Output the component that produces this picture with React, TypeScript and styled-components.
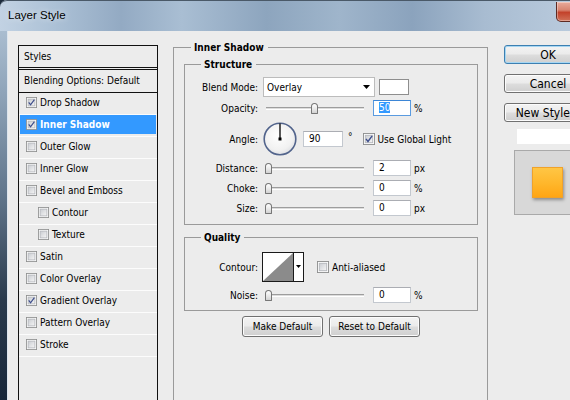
import React, { useId } from 'react';
import styled, { createGlobalStyle } from 'styled-components';

const GlobalStyle = createGlobalStyle`
  html, body {
    margin: 0;
    padding: 0;
    width: 570px;
    height: 400px;
    overflow: hidden;
    background: #1d2c3d;
  }
  body {
    font-family: "DejaVu Sans Condensed", "DejaVu Sans", sans-serif;
    font-stretch: condensed;
    font-size: 10px;
    color: #000;
  }
  * {
    box-sizing: border-box;
  }
`;

type StyleItem = {
  label: string;
  checked?: boolean;
  selected?: boolean;
  nested?: boolean;
};

const styleItems: StyleItem[] = [
  { label: 'Drop Shadow', checked: true },
  { label: 'Inner Shadow', checked: true, selected: true },
  { label: 'Outer Glow' },
  { label: 'Inner Glow' },
  { label: 'Bevel and Emboss' },
  { label: 'Contour', nested: true },
  { label: 'Texture', nested: true },
  { label: 'Satin' },
  { label: 'Color Overlay' },
  { label: 'Gradient Overlay', checked: true },
  { label: 'Pattern Overlay' },
  { label: 'Stroke' },
];

const Checkbox: React.FC<{ checked?: boolean; size?: number }> = ({ checked, size = 12 }) => {
  const id = useId();
  return (
    <CheckSvg width={size} height={size} viewBox="0 0 13 13">
      <defs>
        <linearGradient id={id} x1="0" y1="0" x2="1" y2="1">
          <stop offset="0" stopColor="#c9ccd1" />
          <stop offset="1" stopColor="#f6f6f6" />
        </linearGradient>
      </defs>
      <rect x="0.5" y="0.5" width="12" height="12" fill="#fdfdfd" stroke="#8e8f8f" />
      <rect x="2.5" y="2.5" width="8" height="8" fill={`url(#${id})`} stroke="#b4b7bc" />
      {checked && (
        <path d="M3.2 6.4 L5.4 9.2 L9.9 3.2" fill="none" stroke="#3f4f8c" strokeWidth="1.5" />
      )}
    </CheckSvg>
  );
};

const Slider: React.FC<{ value: number }> = ({ value }) => (
  <SliderBox>
    <Track />
    <Thumb style={{ left: 3 + (value / 100) * 91 }} />
  </SliderBox>
);

const AngleDial: React.FC = () => (
  <DialSvg width="34" height="34" viewBox="0 0 34 34">
    <defs>
      <radialGradient id="dialFill" cx="0.45" cy="0.4" r="0.65">
        <stop offset="0" stopColor="#ffffff" />
        <stop offset="0.7" stopColor="#f1f1f1" />
        <stop offset="1" stopColor="#d9dbe0" />
      </radialGradient>
    </defs>
    <circle cx="17" cy="17" r="15.8" fill="url(#dialFill)" stroke="#52648c" strokeWidth="1.6" />
    <line x1="17" y1="17" x2="17" y2="1.5" stroke="#000" strokeWidth="1.3" />
    <rect x="15.5" y="15.5" width="3" height="3" fill="#000" />
  </DialSvg>
);

const ContourPicker: React.FC = () => (
  <svg width="42" height="30" viewBox="0 0 42 30">
    <rect x="0.5" y="0.5" width="41" height="29" fill="#fff" stroke="#1a1a1a" />
    <polygon points="1,29 31,1 31,29" fill="#8b8b8b" />
    <line x1="31.5" y1="1" x2="31.5" y2="29" stroke="#1a1a1a" />
    <polygon points="34,13 39,13 36.5,16" fill="#000" />
  </svg>
);

const SliderRow: React.FC<{ label: string; value: number; field: string; unit: string; focused?: boolean; mt?: number }> = ({
  label,
  value,
  field,
  unit,
  focused,
  mt = 0,
}) => (
  <Row $h={20} $mt={mt}>
    <Label>{label}</Label>
    <Slider value={value} />
    <NumberField $w={38} $ml={4} $focused={focused}>
      {focused ? <Selection>{field}</Selection> : field}
    </NumberField>
    <Unit>{unit}</Unit>
  </Row>
);

export default function App() {
  return (
    <>
      <GlobalStyle />
      <Window>
        <TitleBar>
          <Title>Layer Style</Title>
          <CloseButton />
        </TitleBar>
        <Client>
          <StylesPanel>
            <StylesHeader>Styles</StylesHeader>
            <StylesList>
              <BlendingRow>Blending Options: Default</BlendingRow>
              {styleItems.map((item) => (
                <Item key={item.label}>
                  <ItemInner $selected={item.selected} $nested={item.nested}>
                    <Checkbox checked={item.checked} size={11} />
                    <ItemText>{item.label}</ItemText>
                  </ItemInner>
                </Item>
              ))}
            </StylesList>
          </StylesPanel>

          <OuterGroup>
            <OuterLegend>Inner Shadow</OuterLegend>
            <SubGroup $pt={6} $pb={6}>
              <SubLegend>Structure</SubLegend>
              <Row $h={20}>
                <Label>Blend Mode:</Label>
                <Select>
                  <span>Overlay</span>
                  <svg width="7" height="4" viewBox="0 0 7 4">
                    <polygon points="0,0 7,0 3.5,4" fill="#000" />
                  </svg>
                </Select>
                <ColorSwatch />
              </Row>
              <SliderRow label="Opacity:" value={50} field="50" unit="%" focused mt={1} />
              <Row $h={38} $mt={2}>
                <Label>Angle:</Label>
                <AngleDial />
                <NumberField $w={40} $ml={6}>90</NumberField>
                <Degree>°</Degree>
                <Checkbox checked size={12} />
                <CheckText>Use Global Light</CheckText>
              </Row>
              <SliderRow label="Distance:" value={0} field="2" unit="px" />
              <SliderRow label="Choke:" value={0} field="0" unit="%" />
              <SliderRow label="Size:" value={0} field="0" unit="px" />
            </SubGroup>

            <SubGroup $pt={8} $pb={5} $mt={6}>
              <SubLegend>Quality</SubLegend>
              <Row $h={30}>
                <Label>Contour:</Label>
                <ContourPicker />
                <AntiAlias>
                  <Checkbox size={12} />
                  <CheckText>Anti-aliased</CheckText>
                </AntiAlias>
              </Row>
              <SliderRow label="Noise:" value={0} field="0" unit="%" mt={3} />
            </SubGroup>

            <ButtonRow>
              <DialogButton $w={81} $h={21}>Make Default</DialogButton>
              <DialogButton $w={91} $h={21}>Reset to Default</DialogButton>
            </ButtonRow>
          </OuterGroup>

          <SideColumn>
            <DialogButton $w={88} $h={19} $primary $big>OK</DialogButton>
            <DialogButton $w={88} $h={19} $mt={10} $big>Cancel</DialogButton>
            <DialogButton $w={88} $h={19} $mt={10} $big>New Style...</DialogButton>
            <PreviewStrip />
            <PreviewBox>
              <PreviewSquare />
            </PreviewBox>
          </SideColumn>
        </Client>
      </Window>
    </>
  );
}

const Window = styled.div`
  width: 606px;
  height: 400px;
  display: flex;
  flex-direction: column;
  border-top-left-radius: 7px;
  overflow: hidden;
  background: linear-gradient(180deg, #b7c9db 0%, #91a6bb 22%, #5e7389 50%, #2a3a4c 75%, #18273a 100%);
`;

const TitleBar = styled.div`
  flex: none;
  height: 31px;
  display: flex;
  align-items: flex-start;
  justify-content: space-between;
  padding-left: 8px;
  border-top: 1px solid #4a5968;
  border-top-left-radius: 7px;
  background: linear-gradient(
    90deg,
    #c2d2e3 0%,
    #acc1d6 9%,
    #93aac3 20%,
    #a9bed3 30%,
    #8da5be 44%,
    #9fb5cb 56%,
    #8ba3bd 68%,
    #a8bcd1 80%,
    #c0d0e1 100%
  );
`;

const Title = styled.span`
  font-family: "Liberation Sans", Arial, sans-serif;
  font-size: 11.5px;
  line-height: 29px;
  color: #000;
  text-shadow: 0 0 6px rgba(255, 255, 255, 0.8);
`;

const CloseButton = styled.div`
  width: 46px;
  height: 20px;
  margin-top: 1px;
  margin-right: 4px;
  border: 1px solid #5e2a22;
  border-top: none;
  border-radius: 0 0 5px 5px;
  background: linear-gradient(180deg, #e8ab9c 0%, #d88571 42%, #c3422b 55%, #d07158 100%);
  box-shadow: inset 0 0 0 1px rgba(255, 255, 255, 0.35);
`;

const Client = styled.div`
  flex: 1;
  min-height: 0;
  margin-left: 7px;
  border-left: 1px solid #dce5ee;
  background: #ececec;
  display: flex;
  align-items: flex-start;
`;

const StylesPanel = styled.div`
  flex: none;
  width: 140px;
  height: 400px;
  margin: 14px 0 0 10px;
  border-left: 1px solid #111;
  border-right: 1px solid #111;
`;

const StylesHeader = styled.div`
  height: 23px;
  padding-left: 5px;
  line-height: 21px;
  border-top: 1px solid #111;
  border-bottom: 1px solid #111;
`;

const StylesList = styled.div`
  margin-top: 1px;
  border-top: 1px solid #111;
`;

const BlendingRow = styled.div`
  height: 23px;
  padding-left: 5px;
  line-height: 22px;
  border-bottom: 1px solid #111;
`;

const Item = styled.div`
  height: 22px;
  padding: 0 1px 2px;
  border-bottom: 1px solid #fcfcfc;
`;

const ItemInner = styled.div<{ $selected?: boolean; $nested?: boolean }>`
  height: 19px;
  display: flex;
  align-items: center;
  padding-left: ${(p) => (p.$nested ? 18 : 6)}px;
  background: ${(p) => (p.$selected ? '#3399ff' : 'transparent')};
  color: ${(p) => (p.$selected ? '#fff' : '#000')};
  font-weight: ${(p) => (p.$selected ? 'bold' : 'normal')};
`;

const ItemText = styled.span`
  margin-left: 3px;
  white-space: nowrap;
`;

const CheckSvg = styled.svg`
  flex: none;
  display: block;
`;

const OuterGroup = styled.fieldset`
  flex: none;
  width: 315px;
  height: 400px;
  margin: 10px 0 0 15px;
  padding: 0 9px 0 10px;
  min-inline-size: 0;
  border: 1px solid #9a9a9a;
`;

const OuterLegend = styled.legend`
  margin-left: 7px;
  padding: 0 4px 0 3px;
  font-weight: bold;
  line-height: 13px;
`;

const SubGroup = styled.fieldset<{ $pt: number; $pb: number; $mt?: number }>`
  margin: ${(p) => p.$mt ?? 4}px 0 0;
  padding: ${(p) => p.$pt}px 0 ${(p) => p.$pb}px;
  min-inline-size: 0;
  border: 1px solid #9a9a9a;
`;

const SubLegend = styled.legend`
  margin-left: 16px;
  padding: 0 4px 0 3px;
  font-weight: bold;
  line-height: 13px;
`;

const Row = styled.div<{ $h: number; $mt?: number }>`
  height: ${(p) => p.$h}px;
  margin-top: ${(p) => p.$mt ?? 0}px;
  display: flex;
  align-items: center;
  white-space: nowrap;
`;

const Label = styled.span`
  flex: none;
  width: 73px;
  margin-right: 4px;
  text-align: right;
`;

const Select = styled.div`
  flex: none;
  width: 112px;
  height: 20px;
  margin-left: 1px;
  padding: 0 4px 0 3px;
  display: flex;
  align-items: center;
  justify-content: space-between;
  background: #fff;
  border: 1px solid #bcbcbc;
`;

const ColorSwatch = styled.div`
  flex: none;
  width: 30px;
  height: 16px;
  margin-left: 4px;
  background: #fff;
  border: 1px solid #8e8e8e;
`;

const SliderBox = styled.div`
  flex: none;
  position: relative;
  width: 107px;
  height: 14px;
`;

const Track = styled.div`
  height: 3px;
  margin: 6px 5px 0 4px;
  background: #dcdcdc;
  border-top: 1px solid #9d9d9d;
  border-bottom: 1px solid #fff;
`;

const Thumb = styled.div`
  position: absolute;
  top: 2px;
  width: 7px;
  height: 11px;
  border: 1px solid #777;
  border-radius: 4px 4px 1px 1px;
  background: linear-gradient(180deg, #ffffff 0%, #e6e6e6 60%, #d2d2d2 100%);
`;

const NumberField = styled.div<{ $w: number; $ml: number; $focused?: boolean }>`
  flex: none;
  width: ${(p) => p.$w}px;
  height: 16px;
  margin-left: ${(p) => p.$ml}px;
  padding-left: 5px;
  line-height: 14px;
  background: #fff;
  border: 1px solid ${(p) => (p.$focused ? '#5a9be0' : '#c3c8cf')};
  border-top-color: ${(p) => (p.$focused ? '#3d86d6' : '#abadb3')};
`;

const Selection = styled.span`
  background: #3399ff;
  color: #fff;
`;

const Unit = styled.span`
  margin-left: 3px;
`;

const Degree = styled.span`
  margin: 0 10px 5px 5px;
`;

const CheckText = styled.span`
  margin-left: 3px;
`;

const DialSvg = styled.svg`
  flex: none;
  margin-left: 1px;
`;

const AntiAlias = styled.div`
  display: flex;
  align-items: center;
  margin-left: 13px;
`;

const ButtonRow = styled.div`
  display: flex;
  justify-content: center;
  gap: 6px;
  margin-top: 5px;
`;

const DialogButton = styled.div<{ $w: number; $h: number; $mt?: number; $primary?: boolean; $big?: boolean }>`
  flex: none;
  width: ${(p) => p.$w}px;
  height: ${(p) => p.$h}px;
  margin-top: ${(p) => p.$mt ?? 0}px;
  display: flex;
  align-items: center;
  justify-content: center;
  white-space: nowrap;
  font-size: ${(p) => (p.$big ? 12 : 10)}px;
  border: 1px solid ${(p) => (p.$primary ? '#3c7fb1' : '#707070')};
  border-radius: 3px;
  background: linear-gradient(180deg, #f3f3f3 0%, #ebebeb 48%, #dddddd 52%, #cfcfcf 100%);
  box-shadow: inset 0 0 0 1px ${(p) => (p.$primary ? '#a6d6f2' : '#fcfcfc')};
`;

const SideColumn = styled.div`
  flex: none;
  display: flex;
  flex-direction: column;
  align-items: flex-start;
  margin: 14px 0 0 16px;
`;

const PreviewStrip = styled.div`
  width: 80px;
  height: 15px;
  margin: 7px 0 0 13px;
  background: #fff;
`;

const PreviewBox = styled.div`
  width: 66px;
  height: 65px;
  margin: 6px 0 0 10px;
  display: flex;
  align-items: center;
  justify-content: center;
  background: #d8d8d8;
  border: 1px solid #a9a9a9;
`;

const PreviewSquare = styled.div`
  width: 31px;
  height: 31px;
  background: linear-gradient(180deg, #ffc645 0%, #ffb62a 55%, #ffa514 100%);
  border: 1px solid #f0a22a;
  box-shadow: 1px 2px 3px rgba(0, 0, 0, 0.35);
`;
